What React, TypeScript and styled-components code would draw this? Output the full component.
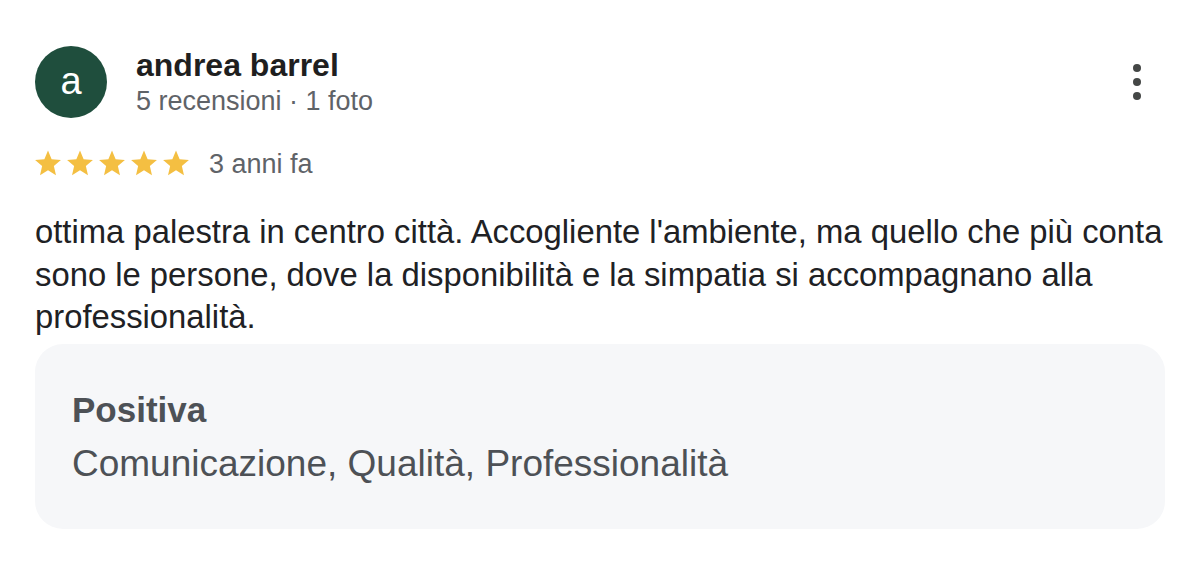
import React from "react";
import styled, { createGlobalStyle } from "styled-components";

const GlobalStyle = createGlobalStyle`
  html, body {
    margin: 0;
    padding: 0;
    background: #ffffff;
    font-family: "Liberation Sans", Arial, sans-serif;
  }
`;

const Review = styled.article`
  width: 1130px;
  padding: 46px 35px 0;
  color: #202124;
`;

const Header = styled.header`
  display: flex;
  align-items: center;
  gap: 29px;
`;

const Avatar = styled.div`
  width: 72px;
  height: 72px;
  border-radius: 50%;
  background: #1f4e3d;
  color: #ffffff;
  display: flex;
  align-items: center;
  justify-content: center;
  font-size: 38px;
  line-height: 1;
  padding-bottom: 3px;
  box-sizing: border-box;
  flex-shrink: 0;
`;

const Who = styled.div`
  flex: 1;
  display: flex;
  flex-direction: column;
`;

const Name = styled.div`
  font-size: 32px;
  font-weight: 700;
  line-height: 37px;
  color: #1f1f1f;
`;

const Meta = styled.div`
  font-size: 27px;
  line-height: 34px;
  color: #5f6368;
`;

const MoreButton = styled.button`
  width: 40px;
  height: 48px;
  border: none;
  background: none;
  padding: 0;
  margin-right: 8px;
  display: flex;
  align-items: center;
  justify-content: center;
  color: #444746;
`;

const RatingRow = styled.div`
  display: flex;
  align-items: center;
  gap: 17px;
  margin-top: 30px;
  height: 30px;
`;

const Stars = styled.div`
  display: flex;
  margin-left: -3px;
`;

const When = styled.span`
  font-size: 27px;
  color: #5f6368;
  padding-top: 2px;
`;

const Body = styled.p`
  margin: 33px 0 0;
  font-size: 32.8px;
  line-height: 42.5px;
  color: #202124;
`;

const Highlight = styled.section`
  margin-top: 5px;
  background: #f6f7f9;
  border-radius: 28px;
  padding: 44px 37px 43px;
`;

const HighlightTitle = styled.div`
  font-size: 35px;
  font-weight: 700;
  line-height: 44px;
  color: #4d5156;
`;

const HighlightText = styled.div`
  margin-top: 10px;
  font-size: 37px;
  line-height: 44px;
  color: #4d5156;
`;

const Star = () => (
  <svg width="32" height="31" viewBox="0 0 24 24">
    <path
      fill="#f4bf42"
      d="M12 17.27L18.18 21l-1.64-7.03L22 9.24l-7.19-.61L12 2 9.19 8.63 2 9.24l5.46 4.73L5.82 21z"
    />
  </svg>
);

const Dots = () => (
  <svg width="10" height="36" viewBox="0 0 10 36">
    <circle cx="5" cy="4" r="4" fill="currentColor" />
    <circle cx="5" cy="18" r="4" fill="currentColor" />
    <circle cx="5" cy="32" r="4" fill="currentColor" />
  </svg>
);

export default function App() {
  return (
    <>
      <GlobalStyle />
      <Review>
        <Header>
          <Avatar>a</Avatar>
          <Who>
            <Name>andrea barrel</Name>
            <Meta>5 recensioni · 1 foto</Meta>
          </Who>
          <MoreButton aria-label="Altro">
            <Dots />
          </MoreButton>
        </Header>
        <RatingRow>
          <Stars>
            {[0, 1, 2, 3, 4].map((i) => (
              <Star key={i} />
            ))}
          </Stars>
          <When>3 anni fa</When>
        </RatingRow>
        <Body>
          ottima palestra in centro città. Accogliente l'ambiente, ma quello che più conta
          sono le persone, dove la disponibilità e la simpatia si accompagnano alla
          professionalità.
        </Body>
        <Highlight>
          <HighlightTitle>Positiva</HighlightTitle>
          <HighlightText>Comunicazione, Qualità, Professionalità</HighlightText>
        </Highlight>
      </Review>
    </>
  );
}
